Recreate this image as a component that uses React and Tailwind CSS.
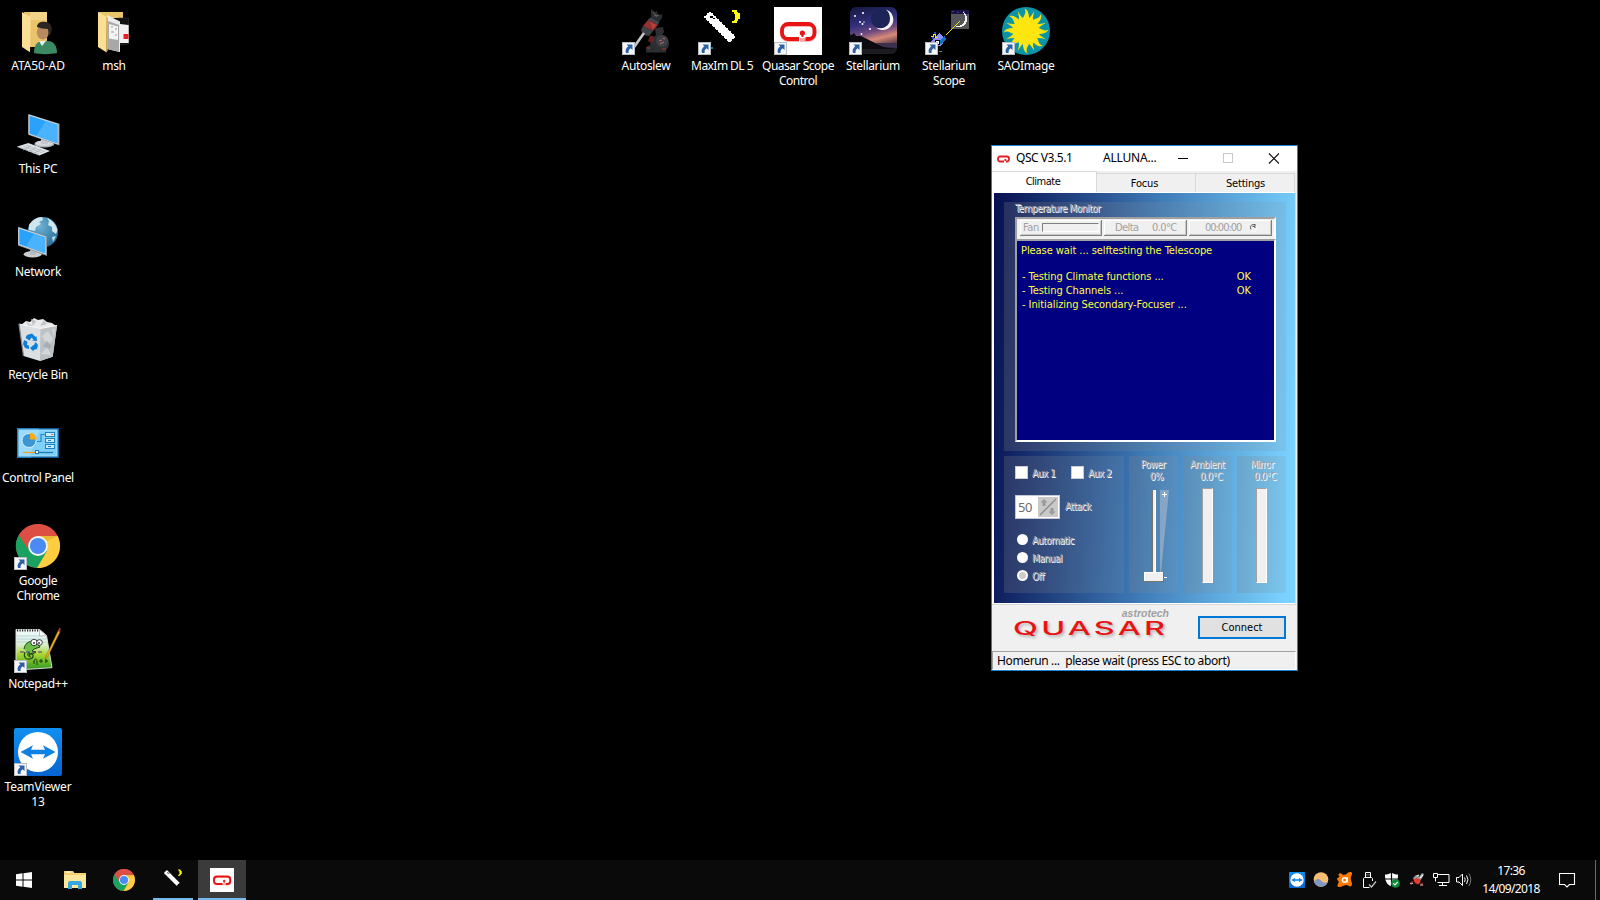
import React from "react";

const SEGOE = "font-['Noto_Sans','Open_Sans',sans-serif]";
const TAHOMA = "font-['DejaVu_Sans_Condensed','DejaVu_Sans',sans-serif]";
const EMBOSS = "text-[#a3a3a8] [text-shadow:1px_1px_0_#ffffff]";
const GROUP = "bg-[linear-gradient(90deg,rgb(128_128_128_/_0.25),rgb(128_150_165_/_0.18))]";

/* ---------- icons ---------- */

function Icon48({ children, crisp }) {
  return (
    <svg width="48" height="48" viewBox="0 0 48 48" className="block" shapeRendering={crisp ? "crispEdges" : "auto"}>
      {children}
    </svg>
  );
}

function UserFolder() {
  return (
    <Icon48>
      <path d="M10 5h23v35H14z" fill="#e9c46b" />
      <path d="M16 5h17v8H16z" fill="#f3d489" />
      <path d="M8 5l8.700 5-.7 35.300L8 40z" fill="#fbdf95" />
      <path d="M20 46c0-8 3-12 9-12h5c6 0 9 5 9 12-7 1.500-17 1.500-23 0z" fill="#3b8a63" />
      <path d="M25 34l3 5 4-5z" fill="#e8eef0" />
      <ellipse cx="28.800" cy="25.500" rx="6" ry="7" fill="#b98a62" />
      <path d="M23 20c0-5 5-6 9-5 5 1 7 5 5 11l-2 3c-1-3 0-5-1-7-4 0-8-1-11-2z" fill="#2b2523" />
    </Icon48>
  );
}

function DocFolder() {
  return (
    <Icon48>
      <path d="M8 5h25v6H14z" fill="#e9c46b" />
      <path d="M28 11l10.500 0v26L30 38z" fill="#111" stroke="#333" strokeWidth=".6" />
      <path d="M30 17l8.700 1v18H30z" fill="#f2f2f2" />
      <path d="M33.500 27h5v5h-5z" fill="#e02428" />
      <path d="M17 8l13 6.500V45l-13-3z" fill="#ececec" />
      <path d="M18 14l11 4v27l-11-3z" fill="#a9a9a9" />
      <path d="M19 17l9 2.500V33l-9-1.500z" fill="#f4f4f4" />
      <path d="M21 20h2m2 2h2m-6 3h3m1 3h2" stroke="#999" strokeWidth="1" />
      <path d="M8 5l9 5-.3 35.500L8 40z" fill="#fbdf95" />
      <path d="M16.500 10l1.200.5V44l-1.200 1z" fill="#c99a3d" />
    </Icon48>
  );
}

function Screen({ points, edge, glare }) {
  return (
    <>
      <polygon points={edge} fill="#8b9298" />
      <polygon points={points} fill="#2aa2fb" stroke="#d4dadf" strokeWidth="1" />
      <polygon points={glare} fill="#55b8ff" opacity=".75" />
    </>
  );
}

function ThisPC() {
  return (
    <Icon48>
      <ellipse cx="30.300" cy="34" rx="10" ry="3.600" fill="#aab1b8" />
      <ellipse cx="30.300" cy="33.300" rx="9" ry="2.800" fill="#d5dade" />
      <path d="M27 28l7 2v4h-7z" fill="#c3c9ce" />
      <Screen edge="14.300,4 45.500,13.700 45.500,35.500 14.300,24.800" points="15,5 44,14.400 44,34 15,24" glare="32,10.800 44,14.800 44,33.500 22,26" />
      <path d="M2.700 36.700l11.600-3.700L36 41l-10.700 4.500z" fill="#dfe3e8" />
      <path d="M6 37.500l19 6.500M9 36.300l19 6.500M12 35.200l19 6.500M9 40l8-4m-3 5.800l8-4m-3 5.800l8-4" stroke="#a9b0b8" strokeWidth=".7" />
    </Icon48>
  );
}

function NetworkIcon() {
  return (
    <Icon48>
      <defs>
        <radialGradient id="globe" cx=".4" cy=".3" r=".8">
          <stop offset="0" stopColor="#6fb3d6" />
          <stop offset="1" stopColor="#1f6690" />
        </radialGradient>
      </defs>
      <circle cx="28.700" cy="19.300" r="15.300" fill="url(#globe)" />
      <path d="M15 12c3-5 8-8 13-8l1 3-4 2 2 2-5 3-1 4-6-1z" fill="#cfe6ef" />
      <path d="M33 5c5 2 9 6 10.500 12L42 21l-4-3 0-4-4-2 1-4z" fill="#cfe6ef" />
      <path d="M38 24l4-1-3 6z" fill="#b9dbe9" />
      <ellipse cx="18.700" cy="41.300" rx="9" ry="3.200" fill="#c9ced3" />
      <path d="M16 36l6 2v4h-6z" fill="#b5bcc2" />
      <Screen edge="4,13.800 33,23.500 33,43 4,32.500" points="4.800,15 31.600,24 31.600,41 4.800,31.500" glare="20,20.500 31.600,24.500 31.600,40.500 12,33.500" />
    </Icon48>
  );
}

function RecycleBin() {
  return (
    <Icon48>
      <path d="M7 9l5-4 4 1 4-4 4 2 5-1 4 3 5 1 4 3-16 5z" fill="#e9ebec" />
      <path d="M17 3l5 2-3 5zM30 4l-4 6 7-2zM12 6l3 5 4-1z" fill="#bfc4c8" />
      <path d="M5 8l21.500 4.500L43 9.500l-4.300 31.200L26 45 9.500 40z" fill="#dcdfe1" />
      <path d="M26.500 12.500L43 9.500l-4.300 31.200L26 45z" fill="#bcc1c5" />
      <path d="M28 20l6-5 5 8-5 7zM27 38l6-7 4 8zM38 14l3-2-1 9z" fill="#d3d7da" />
      <path d="M29 30l4-5 5 5-3 3z" fill="#a8aeb3" />
      <path d="M5 8l21.500 4.500L43 9.500" fill="none" stroke="#f5f6f7" strokeWidth="1" />
      <path d="M5 8l4.500 32" stroke="#85898c" strokeWidth="1.200" />
      <g fill="#0a7fd9">
        <path d="M13 19l5-1.500 3.500 3.500 1-1 .5 5-5-.5 1.500-1-2-2-2 3-4-2.500z" />
        <path d="M10 24l3.500 1.500L13 29l2 .5V33l-4-1-2-4z" />
        <path d="M17 30l3-1 1.500-3 2.500 3-1 4-3.500 1v1.500L16 32l3-2.500z" />
      </g>
    </Icon48>
  );
}

function ControlPanel() {
  return (
    <Icon48>
      <rect x="3" y="9" width="42" height="30" fill="#0d5c96" />
      <path d="M3 9h22l-8 30H3z" fill="#2380bd" />
      <rect x="5" y="11" width="38" height="26" fill="#7fd0fb" stroke="#a9e2ff" strokeWidth="1" />
      <path d="M5.500 11.500h20L16 36.500H5.500z" fill="#9adcff" />
      <circle cx="15" cy="21.500" r="7" fill="#3a97d3" stroke="#e6f5ff" strokeWidth=".8" />
      <path d="M16 20.500v-6.700a7 7 0 016.800 6.700z" fill="#fbab18" />
      <path d="M23 22.500h4v-7h4" fill="none" stroke="#2588c8" strokeWidth="1.200" />
      <g fill="#c8ecff" stroke="#1f80c4" strokeWidth="1">
        <rect x="31.500" y="13.500" width="9" height="4" />
        <rect x="31.500" y="19.500" width="9" height="4" />
        <rect x="31.500" y="25.500" width="9" height="4" />
      </g>
      <path d="M37 15.500h2.500" stroke="#f08a1c" strokeWidth="1.200" />
      <path d="M34 21.500h3m-3 6h3" stroke="#1f80c4" strokeWidth="1.200" />
      <path d="M9 33.500h13" stroke="#f59a15" strokeWidth="1.200" />
      <path d="M24 33.500h15" stroke="#1976b8" strokeWidth="1.200" />
      <rect x="21.500" y="31.500" width="3" height="3" fill="#fff" stroke="#1976b8" />
    </Icon48>
  );
}

function ChromeShape() {
  return (
    <>
      <circle cx="24" cy="24" r="22" fill="#dd4f43" />
      <path d="M24 24L4.900 13A22 22 0 0024 46l9.500-16.500z" fill="#1aa260" />
      <path d="M24 24l9 5L23 46A22 22 0 0043.600 14H24z" fill="#ffcd40" />
      <path d="M24 14h19.700L33.500 19z" fill="#c9961e" opacity=".35" />
      <path d="M4.900 13A22 22 0 0143.600 14H24a10 10 0 00-9 6l-2 6z" fill="#dd4f43" />
      <circle cx="24" cy="24" r="9.900" fill="#f4f6f8" />
      <circle cx="24" cy="24" r="8.100" fill="#4a8af4" />
    </>
  );
}

function ChromeIcon() {
  return (
    <Icon48>
      <ChromeShape />
    </Icon48>
  );
}

function NotepadPP() {
  return (
    <Icon48>
      <defs>
        <linearGradient id="npp" x1="0" y1="0" x2="0" y2="1">
          <stop offset="0" stopColor="#f4fbff" />
          <stop offset=".38" stopColor="#d9efd0" />
          <stop offset=".62" stopColor="#a8d832" />
          <stop offset="1" stopColor="#2f9a20" />
        </linearGradient>
      </defs>
      <path d="M2 4.500h23.500l7 6 5.500 32.200L11 44.500 2 44z" fill="url(#npp)" stroke="#d8d8d8" strokeWidth="1" />
      <path d="M3 5.500h22" stroke="#222" strokeWidth="2" strokeDasharray="1.200 1.300" />
      <path d="M3 11h26M3 14h29M3 17h29" stroke="#a9cfe6" strokeWidth=".8" />
      <path d="M25.500 4.500v6.500l7-.5z" fill="#fff" stroke="#999" strokeWidth=".6" />
      <path d="M10 24c1-7 7-9 13-7l3 5-6 2-2 2 4 1-3 2-5-1c-2 3 2 4 2 2" fill="#6cc04a" stroke="#1c4a12" strokeWidth="1" />
      <path d="M11 27c-2 5 1 8 5 7s4-5 1-5-2 3 0 3" fill="none" stroke="#1c4a12" strokeWidth="1.200" />
      <circle cx="20" cy="17.500" r="3.200" fill="#fff" stroke="#111" strokeWidth=".8" />
      <circle cx="25.500" cy="17.500" r="2.800" fill="#fff" stroke="#111" strokeWidth=".8" />
      <path d="M20 17v2m5-2v2" stroke="#111" strokeWidth="1.200" />
      <path d="M6 27h23" stroke="#5c2b70" strokeWidth="1.200" strokeDasharray="4 2" />
      <path d="M20 37c0-4 3-4 3 0v3m-3-4v3m5-3h4m-2-2v4m4-2h3m-2-2v4" stroke="#163d0c" strokeWidth="1" fill="none" />
      <path d="M44.500 5L32 31l-1 3 2.500-2L46 7z" fill="#f0b429" stroke="#8a5a10" strokeWidth=".5" />
      <path d="M44 6l2 1.200 .7-3.600-1.500-.6z" fill="#a23d3d" />
    </Icon48>
  );
}

function TeamViewerShape() {
  return (
    <>
      <defs>
        <linearGradient id="tv" x1="0" y1="0" x2="0" y2="1">
          <stop offset="0" stopColor="#1090f0" />
          <stop offset="1" stopColor="#0764d0" />
        </linearGradient>
      </defs>
      <rect width="48" height="48" rx="2" fill="url(#tv)" />
      <circle cx="24" cy="24" r="20" fill="#fff" />
      <path d="M6.500 24l12.500-6.700-2 4.400h14l-2-4.400L41.500 24 29 30.700l2-4.400H17l2 4.400z" fill="#0f80e4" />
    </>
  );
}

function TeamViewer() {
  return (
    <Icon48>
      <TeamViewerShape />
    </Icon48>
  );
}

function Autoslew() {
  return (
    <Icon48>
      <path d="M29 2l4 3 2-1 1 4 4-1 0 4-3 4-8-4z" fill="#2a2c30" />
      <path d="M31 5l4 5m-3-1l5-1" stroke="#6b6f75" strokeWidth=".8" />
      <path d="M28.500 10.500l9 4.500-2 3-10-5z" fill="#41464c" />
      <path d="M26 13l10 5-5 6-10-5z" fill="#963030" />
      <path d="M28 15l6 3-3 4z" fill="#b84444" />
      <path d="M21 19l10 5-4 5c-5 0-7-3-8-6z" fill="#3e4247" />
      <path d="M22 26L10 43" stroke="#c4c8cc" strokeWidth="2.600" />
      <path d="M33 21l8-1 1 5-2 3c4 0 7 4 7 8 0 5-3 8-7 9l-7-1-5-6 1-6 5-4z" fill="#2d2f33" />
      <circle cx="40" cy="34" r="6" fill="#3d4045" />
      <path d="M28 29c3-1 5 1 4 4s-4 3-6 1z" fill="#6b2020" />
      <path d="M37 34l3-1m-2 4l4-2m-1-4l2 1" stroke="#c66" strokeWidth="1" />
      <path d="M24 40l4-2 4 5h12v2.500H24z" fill="#2c2e31" />
      <path d="M25 41h3m12 1h4" stroke="#a33" strokeWidth="1.200" />
    </Icon48>
  );
}

function MaximShape() {
  return (
    <>
      <path d="M6 9h1.500V7.500H9V6h1.500V4.500H13V6h1.500v1.500H16V9h1.500v1.500H19V12h1.500v1.500H22V15h1.500v1.500H25V18h1.500v1.500H28V21h1.500v1.500H31V24h1.500v1.500H34V27h1.500v1.500H37v2h-1.500V32H34v1.500h-1.500V35H30v-1.500h-1.500V32H27v-1.500h-1.500V29H24v-1.500h-1.500V26H21v-1.500h-1.500V23H18v-1.500h-1.500V20H15v-1.500h-1.500V17H12v-1.500h-1.500V14H9v-1.500H7.500V11H6z" fill="#fff" />
      <path d="M12 9h3v1.500h1.500V12H15v-1.500h-3z" fill="#000" />
      <path d="M34 3h4.500v1.500H40V6h1.500v6H40v1.500h-1.500V15.500H34V14h1.500v-1.500H37v-6h-1.500V4.500H34z" fill="#ffff00" />
    </>
  );
}

function MaximIcon() {
  return (
    <Icon48 crisp>
      <MaximShape />
      <rect x="13" y="40" width="2" height="2" fill="#0a8080" />
    </Icon48>
  );
}

function QuasarMark() {
  return (
    <g fill="none" stroke="#e81414" strokeWidth="3.800">
      <path d="M25 32.800H14a6 6 0 01-6-6v-3a6 6 0 016-6h20.500a6 6 0 016 6v3a6 6 0 01-6 6H26" stroke="#f9a3a3" />
      <path d="M25 32H14a6 6 0 01-6-6v-3a6 6 0 016-6h20.500a6 6 0 016 6v3a6 6 0 01-6 6H31.500" />
      <circle cx="28.400" cy="26" r="1.600" fill="#e81414" strokeWidth="2" />
      <path d="M28.400 27v3" strokeWidth="1.800" />
    </g>
  );
}

function QuasarIcon() {
  return (
    <Icon48>
      <rect width="48" height="48" fill="#fff" />
      <QuasarMark />
    </Icon48>
  );
}

function Stellarium() {
  return (
    <Icon48>
      <defs>
        <linearGradient id="sky" x1="0" y1="0" x2=".25" y2="1">
          <stop offset="0" stopColor="#14173f" />
          <stop offset=".4" stopColor="#33307a" />
          <stop offset=".6" stopColor="#6f4a80" />
          <stop offset=".76" stopColor="#d98a78" />
          <stop offset="1" stopColor="#2a2035" />
        </linearGradient>
        <clipPath id="skyClip">
          <rect x="1" y="0" width="47" height="47" rx="6" />
        </clipPath>
      </defs>
      <g clipPath="url(#skyClip)">
        <rect width="48" height="48" fill="url(#sky)" />
        <circle cx="32" cy="12" r="10" fill="#1d2458" />
        <path d="M37 2.500a10.500 10.500 0 11-10 18c8 2.500 14-2 14-9 0-4-1.500-7-4-9z" fill="#f8f6f0" />
        <path d="M0 27l3 1 2-2 2 3 5 0 6 3 8 4 9 4 13 2v8H0z" fill="#0a0a10" />
        <path d="M26 36l22 0v5l-12-1z" fill="#3b3050" />
        <path d="M0 42h48v6H0z" fill="#1a1a1f" />
      </g>
      <g fill="#fff">
        <circle cx="14" cy="6" r="1.100" />
        <circle cx="6" cy="9" r="1" />
        <circle cx="11" cy="15" r=".9" />
        <circle cx="13.500" cy="17" r="1" />
        <circle cx="15" cy="15" r=".7" />
        <circle cx="21" cy="22" r="1" />
        <circle cx="12.500" cy="27" r=".9" />
      </g>
    </Icon48>
  );
}

function StellariumScope() {
  return (
    <Icon48 crisp>
      <rect x="26" y="3" width="18" height="19" fill="#55555a" />
      <rect x="26" y="3" width="18" height="4" fill="#1a1240" />
      <path d="M27 4h2m3 1h2m4-1h2m1 3h2" stroke="#5a28a0" strokeWidth="1" />
      <path d="M38 5a8 8 0 11-8 14c5 1 9-2 10-6 0-3 0-6-2-8z" fill="#f3f3ee" />
      <path d="M21 28L34.500 14.500" stroke="#e8e020" strokeWidth="1.400" />
      <path d="M6 34l8-8 7 6-5 7H8z" fill="#8b8ff5" />
      <path d="M17 31l3-2 1 3-5 6-2-2z" fill="#1275c8" />
      <path d="M6 29h2v-2h2v3h3" stroke="#f0e020" fill="none" strokeWidth="1" />
      <path d="M7 31h2m0-5h2" stroke="#3440c8" strokeWidth="1.500" />
      <rect x="10" y="33" width="4" height="4" fill="#fff" stroke="#000" />
      <path d="M14 44.500h3" stroke="#777" strokeWidth="1.500" />
    </Icon48>
  );
}

const SUN_RAYS = Array.from({ length: 16 }, (_, i) => i * 22.5);

function SaoImage() {
  return (
    <Icon48>
      <circle cx="24" cy="24" r="24" fill="#0c93a6" />
      <g fill="#fde50f">
        {SUN_RAYS.map((a, i) => (
          <path
            key={a}
            transform={`rotate(${a} 24 24)`}
            d={i % 2 ? "M21 13Q23.500 8 24 2.500Q24.500 8 27 13Z" : "M20.500 13C21.500 8 25 6.500 22.500 1.500C27.500 4 26.500 9 27.500 13Z"}
          />
        ))}
        <circle cx="24" cy="24" r="13" />
      </g>
    </Icon48>
  );
}

function ShortcutBadge() {
  return (
    <svg width="13" height="13" viewBox="0 0 13 13" className="absolute bottom-0 left-0">
      <rect x=".5" y=".5" width="12" height="12" fill="#f5f6f7" stroke="#b9bcc0" />
      <path d="M4.500 2.500h6v5.500L8.600 6.200C6.800 7.500 6.400 8.800 6.600 11H4C3 8.500 3.900 6 6.300 4.300z" fill="#2c5fa6" />
    </svg>
  );
}

/* ---------- desktop ---------- */

const DESKTOP = [
  { label: "ATA50-AD", Icon: UserFolder, pos: "left-0 top-0", track: "tracking-[-0.08px]" },
  { label: "msh", Icon: DocFolder, pos: "left-[76px] top-0" },
  { label: "This PC", Icon: ThisPC, pos: "left-0 top-[103px]" },
  { label: "Network", Icon: NetworkIcon, pos: "left-0 top-[206px]" },
  { label: "Recycle Bin", Icon: RecycleBin, pos: "left-0 top-[309px]" },
  { label: "Control Panel", Icon: ControlPanel, pos: "left-0 top-[412px]" },
  { label: "Google Chrome", Icon: ChromeIcon, pos: "left-0 top-[515px]", link: true },
  { label: "Notepad++", Icon: NotepadPP, pos: "left-0 top-[618px]", link: true },
  { label: "TeamViewer 13", Icon: TeamViewer, pos: "left-0 top-[721px]", link: true, track: "tracking-[-0.15px]" },
  { label: "Autoslew", Icon: Autoslew, pos: "left-[608px] top-0", link: true },
  { label: "MaxIm DL 5", Icon: MaximIcon, pos: "left-[684px] top-0", link: true, track: "tracking-[-0.55px]" },
  { label: "Quasar Scope Control", Icon: QuasarIcon, pos: "left-[760px] top-0", link: true, track: "tracking-[-0.5px]" },
  { label: "Stellarium", Icon: Stellarium, pos: "left-[835px] top-0", link: true },
  { label: "Stellarium Scope", Icon: StellariumScope, pos: "left-[911px] top-0", link: true },
  { label: "SAOImage", Icon: SaoImage, pos: "left-[988px] top-0", link: true },
];

function DesktopIcon({ label, Icon, pos, link, track = "tracking-[-0.33px]" }) {
  return (
    <div className={`absolute flex w-[76px] flex-col items-center pt-[7px] ${pos}`}>
      <div className="relative">
        <Icon />
        {link && <ShortcutBadge />}
      </div>
      <span className={`mt-[3px] w-[76px] text-center text-[12px] leading-[15px] text-white ${track} ${SEGOE}`}>{label}</span>
    </div>
  );
}

/* ---------- QSC window ---------- */

function TitleBar() {
  return (
    <div className={`flex h-[25px] shrink-0 items-center bg-white text-[12px] leading-[23px] text-black ${SEGOE}`}>
      <svg width="13" height="8" viewBox="0 0 13 8" className="ml-[5px]">
        <path d="M7 6.500H3a2 2 0 01-2-2v-1a2 2 0 012-2h7a2 2 0 012 2v1a2 2 0 01-2 2H9M8.300 4v2" fill="none" stroke="#e02020" strokeWidth="1.800" />
      </svg>
      <span className="mt-[-2px] ml-[6px] w-[87px] tracking-[-0.45px]">QSC V3.5.1</span>
      <span className="mt-[-2px] w-[75px] tracking-[-0.2px]">ALLUNA...</span>
      <svg width="101" height="11" viewBox="0 0 101 11" fill="none">
        <path d="M0 5.500h10" stroke="#000" />
        <rect x="45.500" y=".5" width="9" height="9" stroke="#c8c8c8" />
        <path d="M91 .5l10 10M101 .5l-10 10" stroke="#000" strokeWidth="1.100" />
      </svg>
    </div>
  );
}

function Tabs() {
  return (
    <div className={`flex h-[21px] shrink-0 items-end bg-[#f0f0f0] text-[11px] leading-[14px] text-black ${TAHOMA}`}>
      <div className="h-[21px] w-[105px] border-r border-t border-[#d9d9d9] bg-white pr-[2px] pt-[3px] text-center tracking-[-0.5px]">Climate</div>
      <div className="h-[19px] w-[99px] border-r border-t border-[#d9d9d9] pr-[3px] pt-[3px] text-center tracking-[-0.15px]">Focus</div>
      <div className="h-[19px] w-[99px] border-r border-t border-[#d9d9d9] pl-[1px] pt-[3px] text-center tracking-[-0.2px]">Settings</div>
    </div>
  );
}

function HeaderCell({ className, children }) {
  return (
    <div className={`flex h-[16px] items-center border-b border-r border-[#808080] shadow-[inset_1px_1px_0_#fff,inset_-1px_-1px_0_#c8c8c8] ${className}`}>
      {children}
    </div>
  );
}

function TemperatureMonitor() {
  return (
    <div className={`ml-[10px] mr-[9px] h-[249px] shrink-0 pl-[11px] pr-[10px] ${GROUP}`}>
      <div className={`h-[15px] text-[10px] leading-[14px] tracking-[-0.45px] ${TAHOMA} ${EMBOSS}`}>Temperature Monitor</div>
      <div className={`flex h-[22px] gap-[2px] border-l-2 border-r-2 border-t-2 border-l-[#a0a0a0] border-r-white border-t-[#a0a0a0] bg-[#f0f0f0] pl-[3px] pt-[1px] text-[11px] leading-[14px] text-[#a0a0a0] ${TAHOMA}`}>
        <HeaderCell className="w-[82px] pl-[3px]">
          <span className="pt-[1px] tracking-[-0.4px]">Fan</span>
          <span className="ml-[3px] h-[9px] w-[57px] border border-b-white border-l-[#808080] border-r-white border-t-[#808080]" />
        </HeaderCell>
        <HeaderCell className="w-[83px] pl-[11px]">
          <span className="w-[37px] pt-[1px] tracking-[-0.6px]">Delta</span>
          <span className="pt-[1px] tracking-[-0.6px]">0.0°C</span>
        </HeaderCell>
        <HeaderCell className="w-[83px] pl-[16px]">
          <span className="w-[44px] pt-[1px] tracking-[-1.02px]">00:00:00</span>
          <svg width="9" height="9" viewBox="0 0 9 9" fill="none">
            <path d="M2 6.500C.2 3 3 .8 6 1.800M6 1v2.500H3.500M5.500 5l1-1" stroke="#555" strokeWidth="1" />
            <path d="M3 8c3 1 5-1 5-4" stroke="#fff" />
          </svg>
        </HeaderCell>
      </div>
      <div className={`h-[203px] border-2 border-b-white border-l-[#a0a0a0] border-r-white border-t-[#a0a0a0] bg-[#000080] px-[4px] pt-[3px] text-[11px] leading-[14px] tracking-[-0.07px] text-[#ffff40] ${TAHOMA}`}>
        <p>Please wait ... selftesting the Telescope</p>
        <div className="mt-[12px] pl-[1px] pr-[19px]">
          <p className="flex justify-between"><span>- Testing Climate functions ...</span><span>OK</span></p>
          <p className="flex justify-between"><span>- Testing Channels ...</span><span>OK</span></p>
          <p>- Initializing Secondary-Focuser ...</p>
        </div>
      </div>
    </div>
  );
}

function Check({ label }) {
  return (
    <div className="flex w-[56px] shrink-0 items-center gap-[4px]">
      <span className="h-[13px] w-[13px] border border-[#cccccc] bg-white" />
      <span className="pt-[1px]">{label}</span>
    </div>
  );
}

function Radio({ label, on }) {
  return (
    <div className="flex h-[18px] items-start gap-[4px] pl-[2px]">
      <span className={`h-[11px] w-[11px] rounded-full border-2 border-white ${on ? "bg-[#cccccc]" : "bg-white"}`} />
      <span>{label}</span>
    </div>
  );
}

function Controls() {
  return (
    <div className={`h-[137px] w-[120px] shrink-0 pl-[11px] pt-[10px] ${GROUP}`}>
      <div className="flex h-[13px]">
        <Check label="Aux 1" />
        <Check label="Aux 2" />
      </div>
      <div className="mt-[16px] flex items-center gap-[5px]">
        <div className="flex h-[24px] w-[45px] items-center justify-between border border-[#c4c8d0] bg-white pl-[2px] pr-[1px]">
          <span className={`text-[13px] leading-[18px] tracking-[-0.5px] text-[#6d6d6d] [text-shadow:none] ${SEGOE}`}>50</span>
          <svg width="20" height="20" viewBox="0 0 20 20">
            <rect width="20" height="20" fill="#c9c9c9" />
            <path d="M2 18L18 2" stroke="#888" strokeWidth="1.300" />
            <path d="M6 2l3.500 3.500H7.500V9h-3V5.500H2.500z" fill="#9a9a9a" />
            <path d="M14 18l3.500-3.500h-2V11h-3v3.500h-2z" fill="#9a9a9a" />
          </svg>
        </div>
        <span className="pb-[1px]">Attack</span>
      </div>
      <div className="mt-[15px]">
        <Radio label="Automatic" />
        <Radio label="Manual" />
        <Radio label="Off" on />
      </div>
    </div>
  );
}

function Gauge({ name, namePad = "" }) {
  return (
    <div className={`flex h-[137px] w-[49px] shrink-0 flex-col items-center pt-[2px] ${GROUP}`}>
      <span className={`h-[12px] leading-[14px] ${namePad}`}>{name}</span>
      <span className="h-[18px] pl-[7px] leading-[14px]">0.0°C</span>
      <span className="h-[95px] w-[11px] border border-b-white border-l-[#a0a0a0] border-r-white border-t-[#a0a0a0] bg-[#f0f0f0]" />
    </div>
  );
}

function PowerSlider() {
  return (
    <div className={`flex h-[137px] w-[49px] shrink-0 flex-col items-center pt-[2px] ${GROUP}`}>
      <span className="h-[12px] pr-[1px] leading-[14px]">Power</span>
      <span className="h-[19px] pl-[6px] leading-[14px]">0%</span>
      <svg width="27" height="94" viewBox="0 0 27 94" className="ml-[5px]" shapeRendering="crispEdges">
        <path d="M17 1h9L18 84h-1z" fill="#b9c4d6" opacity=".5" shapeRendering="auto" />
        <path d="M19 5.500h5M21.500 3v5" stroke="#fff" />
        <rect x="8" y="1" width="4" height="84" fill="#f0f0f0" />
        <rect x="8" y="1" width="2" height="84" fill="#7a7468" />
        <rect x="12" y="1" width="1" height="84" fill="#fff" />
        <rect x="1" y="83" width="20" height="10" fill="#7a7468" />
        <rect x="1" y="83" width="19" height="9" fill="#fff" />
        <rect x="2" y="84" width="18" height="8" fill="#f0f0f0" />
        <path d="M21 88.500h3" stroke="#fff" />
      </svg>
    </div>
  );
}

function ControlRow() {
  return (
    <div className={`ml-[10px] mr-[9px] mt-[5px] flex shrink-0 gap-[5px] text-[10px] leading-[13px] tracking-[-0.5px] ${TAHOMA} ${EMBOSS}`}>
      <Controls />
      <PowerSlider />
      <Gauge name="Ambient" namePad="pr-[1px]" />
      <Gauge name="Mirror" namePad="pl-[1px]" />
    </div>
  );
}

function Footer() {
  return (
    <div className="flex h-[46px] shrink-0 justify-between bg-[#f0f0f0] pl-[21px] pr-[11px]">
      <div className="flex w-[157px] flex-col pt-[2px]">
        <span className="self-end pr-[1px] font-['Liberation_Sans',Arial,sans-serif] text-[10.500px] font-bold italic leading-[13px] text-[#a0a0a0]">astrotech</span>
        <span className="origin-left scale-x-[1.8] self-start font-['Inter',sans-serif] text-[18px] font-medium leading-[18px] tracking-[1.800px] text-[#e81414] [text-shadow:1px_2px_2px_#b5b5b5]">QUASAR</span>
      </div>
      <button className={`mt-[11px] flex h-[23px] w-[88px] items-center justify-center border-2 border-[#0078d7] bg-[#e1e1e1] pt-[1px] text-[11px] leading-[14px] text-black ${TAHOMA}`}>Connect</button>
    </div>
  );
}

function QscWindow() {
  return (
    <div className="absolute left-[991px] top-[145px] flex h-[526px] w-[307px] flex-col border border-[#1883d7] bg-[#f0f0f0]">
      <TitleBar />
      <Tabs />
      <div className="mr-[1px] flex h-[413px] w-[304px] shrink-0 flex-col border-b border-r border-[#d9d9d9] bg-white pb-[1px] pl-[2px] pt-[1px]">
        <div className="flex h-[410px] w-[301px] flex-col bg-[linear-gradient(93deg,#060f50_0%,#3f7cb8_52%,#7ad2ff_97%)] pt-[9px]">
          <TemperatureMonitor />
          <ControlRow />
        </div>
      </div>
      <Footer />
      <div className={`mr-[1px] h-[19px] border border-b-white border-l-[#a0a0a0] border-r-white border-t-[#a0a0a0] pl-[4px] text-[12px] leading-[18px] text-black whitespace-pre ${SEGOE}`}>
        <span className="tracking-[-0.37px]">{"Homerun ...  please wait (press ESC to abort)"}</span>
      </div>
    </div>
  );
}

/* ---------- taskbar ---------- */

function TaskButton({ children, className = "" }) {
  return <div className={`flex h-[40px] w-[48px] items-center justify-center ${className}`}>{children}</div>;
}

function TrayIcon({ children }) {
  return (
    <svg width="24" height="16" viewBox="0 0 24 16" fill="none" className="shrink-0">
      {children}
    </svg>
  );
}

function Taskbar() {
  return (
    <div className="absolute inset-x-0 bottom-0 flex h-[40px] items-stretch bg-[#0a0a0a]">
      <TaskButton>
        <svg width="16" height="16" viewBox="0 0 16 16" fill="#fff">
          <path d="M0 2.200L6.500 1.300v6.200H0zM7.500 1.200L16 0v7.500H7.500zM0 8.500h6.500v6.200L0 13.800zM7.500 8.500H16V16l-8.500-1.200z" />
        </svg>
      </TaskButton>
      <TaskButton className="ml-[3px]">
        <svg width="22" height="18" viewBox="0 0 22 18">
          <path d="M0 0h9l1.500 2H22v15H0z" fill="#f5d070" />
          <path d="M2 1h5" stroke="#fff" />
          <path d="M0 4h22v13H0z" fill="#fde79a" />
          <path d="M4 18v-6.500L5.500 10h11l1.500 1.500V18h-4v-4H8v4z" fill="#35a8e4" />
        </svg>
      </TaskButton>
      <TaskButton className="ml-[1px]">
        <svg width="22" height="22" viewBox="2 2 44 44">
          <ChromeShape />
        </svg>
      </TaskButton>
      <TaskButton className="relative ml-[1px]">
        <svg width="24" height="24" viewBox="0 0 48 48">
          <MaximShape />
        </svg>
        <span className="absolute bottom-0 left-[4px] h-[2px] w-[40px] bg-[#76b9ed]" />
      </TaskButton>
      <TaskButton className="relative ml-[1px] bg-[#3b3b3b]">
        <svg width="24" height="24" viewBox="0 0 48 48">
          <rect width="48" height="48" fill="#fff" />
          <QuasarMark />
        </svg>
        <span className="absolute bottom-0 left-0 h-[2px] w-[48px] bg-[#76b9ed]" />
      </TaskButton>
      <div className="ml-auto flex items-center">
        <TrayIcon>
          <g transform="translate(4 0) scale(.3333)">
            <TeamViewerShape />
          </g>
        </TrayIcon>
        <TrayIcon>
          <circle cx="12" cy="7.500" r="7.300" fill="#f5bd72" />
          <path d="M5 9.500c2-3 5-3.500 7-1s5 3 7 1c-1 3.500-4 5.300-7 5.300s-6-2-7-5.300z" fill="#7f97c4" />
        </TrayIcon>
        <TrayIcon>
          <path d="M5.500 2.500C6.500.5 8.500 1 10 3c2-.3 3-.5 4.500-2 1.500-1.300 4-1.300 4.500 0s-1 3-1.200 5c-.2 2 1 4 1.200 6s-1.500 3.500-3.500 1.800c-1.500-1.300-3-.8-4.500-.3-2 .8-4.500 2.300-6 1.200s.5-3.200.7-4.700C6 8.500 4 8.500 4 7s2-1.500 2.300-2c.2-.8-1-1.500-.8-2.500z" fill="#ff7800" />
          <circle cx="11.600" cy="8" r="2.200" stroke="#fff" strokeWidth="1.400" />
          <path d="M14.200 5.300v5.200" stroke="#fff" strokeWidth="1.400" />
        </TrayIcon>
        <TrayIcon>
          <path d="M8.500 5.500v-5h5v5M6.500 15.500v-9l1-1h7l1 1V9M6.500 15.500h6" stroke="#fff" />
          <path d="M10 2.500v1m2-1v1" stroke="#fff" />
          <path d="M12 12.500l2.500 2.500L19 9.500" stroke="#c8c8c8" strokeWidth="1.200" />
        </TrayIcon>
        <TrayIcon>
          <path d="M10.500.5c2 1.500 4 2 6.500 2 0 6-1 9.500-6.500 12C5 12 4 8.500 4 2.500c2.500 0 4.500-.5 6.500-2z" fill="#fff" />
          <path d="M10.500 0v15M3 7h15" stroke="#0a0a0a" strokeWidth="1.200" />
          <circle cx="14.500" cy="11.300" r="4.400" fill="#10893e" />
          <path d="M12.300 11.300l1.700 1.600 2.800-3" stroke="#fff" strokeWidth="1.100" />
        </TrayIcon>
        <TrayIcon>
          <path d="M8 6l3-3h2l1 2 3-4 2 1-2 4-2 3-5 1z" fill="#9a9a9a" />
          <path d="M12 4l2-1m1 3l3-3" stroke="#f0f0f0" strokeWidth="1.200" />
          <path d="M8.500 7.500l3-1.500 3.500 1 .5 3.500-2.500 2-3-1.500z" fill="#e83a30" />
          <path d="M4.500 11l3-2 1 2-2.500 2zM15 12l2.500-1.500 1 3-3 .5z" fill="#8c3434" />
          <path d="M5 11.500h3m7 1.500h3" stroke="#c9c9c9" strokeWidth=".8" />
        </TrayIcon>
        <TrayIcon>
          <path d="M9 2.500h11v8H8.500M13.500 10.500v3M10 13.500h8" stroke="#fff" />
          <path d="M4.500 1.500h4v4h-4zM6.500 5.500v4" stroke="#fff" />
        </TrayIcon>
        <TrayIcon>
          <path d="M3.500 5.500H6l3.500-3.500v11.500L6 10H3.500z" stroke="#fff" />
          <path d="M11.500 5.500q1.500 2 0 4.500M13.500 3.500q3 4 0 8.500" stroke="#fff" />
          <path d="M15.800 1.500q4 6 0 12.500" stroke="#777" />
        </TrayIcon>
        <div className={`w-[68px] text-center text-[12px] leading-[18px] tracking-[-0.62px] text-white ${SEGOE}`}>
          <div>17:36</div>
          <div>14/09/2018</div>
        </div>
        <svg width="17" height="17" viewBox="0 0 17 17" fill="none" className="ml-[14px]">
          <path d="M.5 1.500h15v11h-5l-2.500 2.500-2.500-2.500h-5z" stroke="#fff" strokeWidth="1.100" />
        </svg>
      </div>
      <div className="ml-[19px] mr-[4px] w-[1px] bg-[#6a6a6a]" />
    </div>
  );
}

export default function App() {
  return (
    <div className="relative h-[900px] w-[1600px] overflow-hidden bg-black">
      {DESKTOP.map((item) => (
        <DesktopIcon key={item.label} {...item} />
      ))}
      <QscWindow />
      <Taskbar />
    </div>
  );
}
